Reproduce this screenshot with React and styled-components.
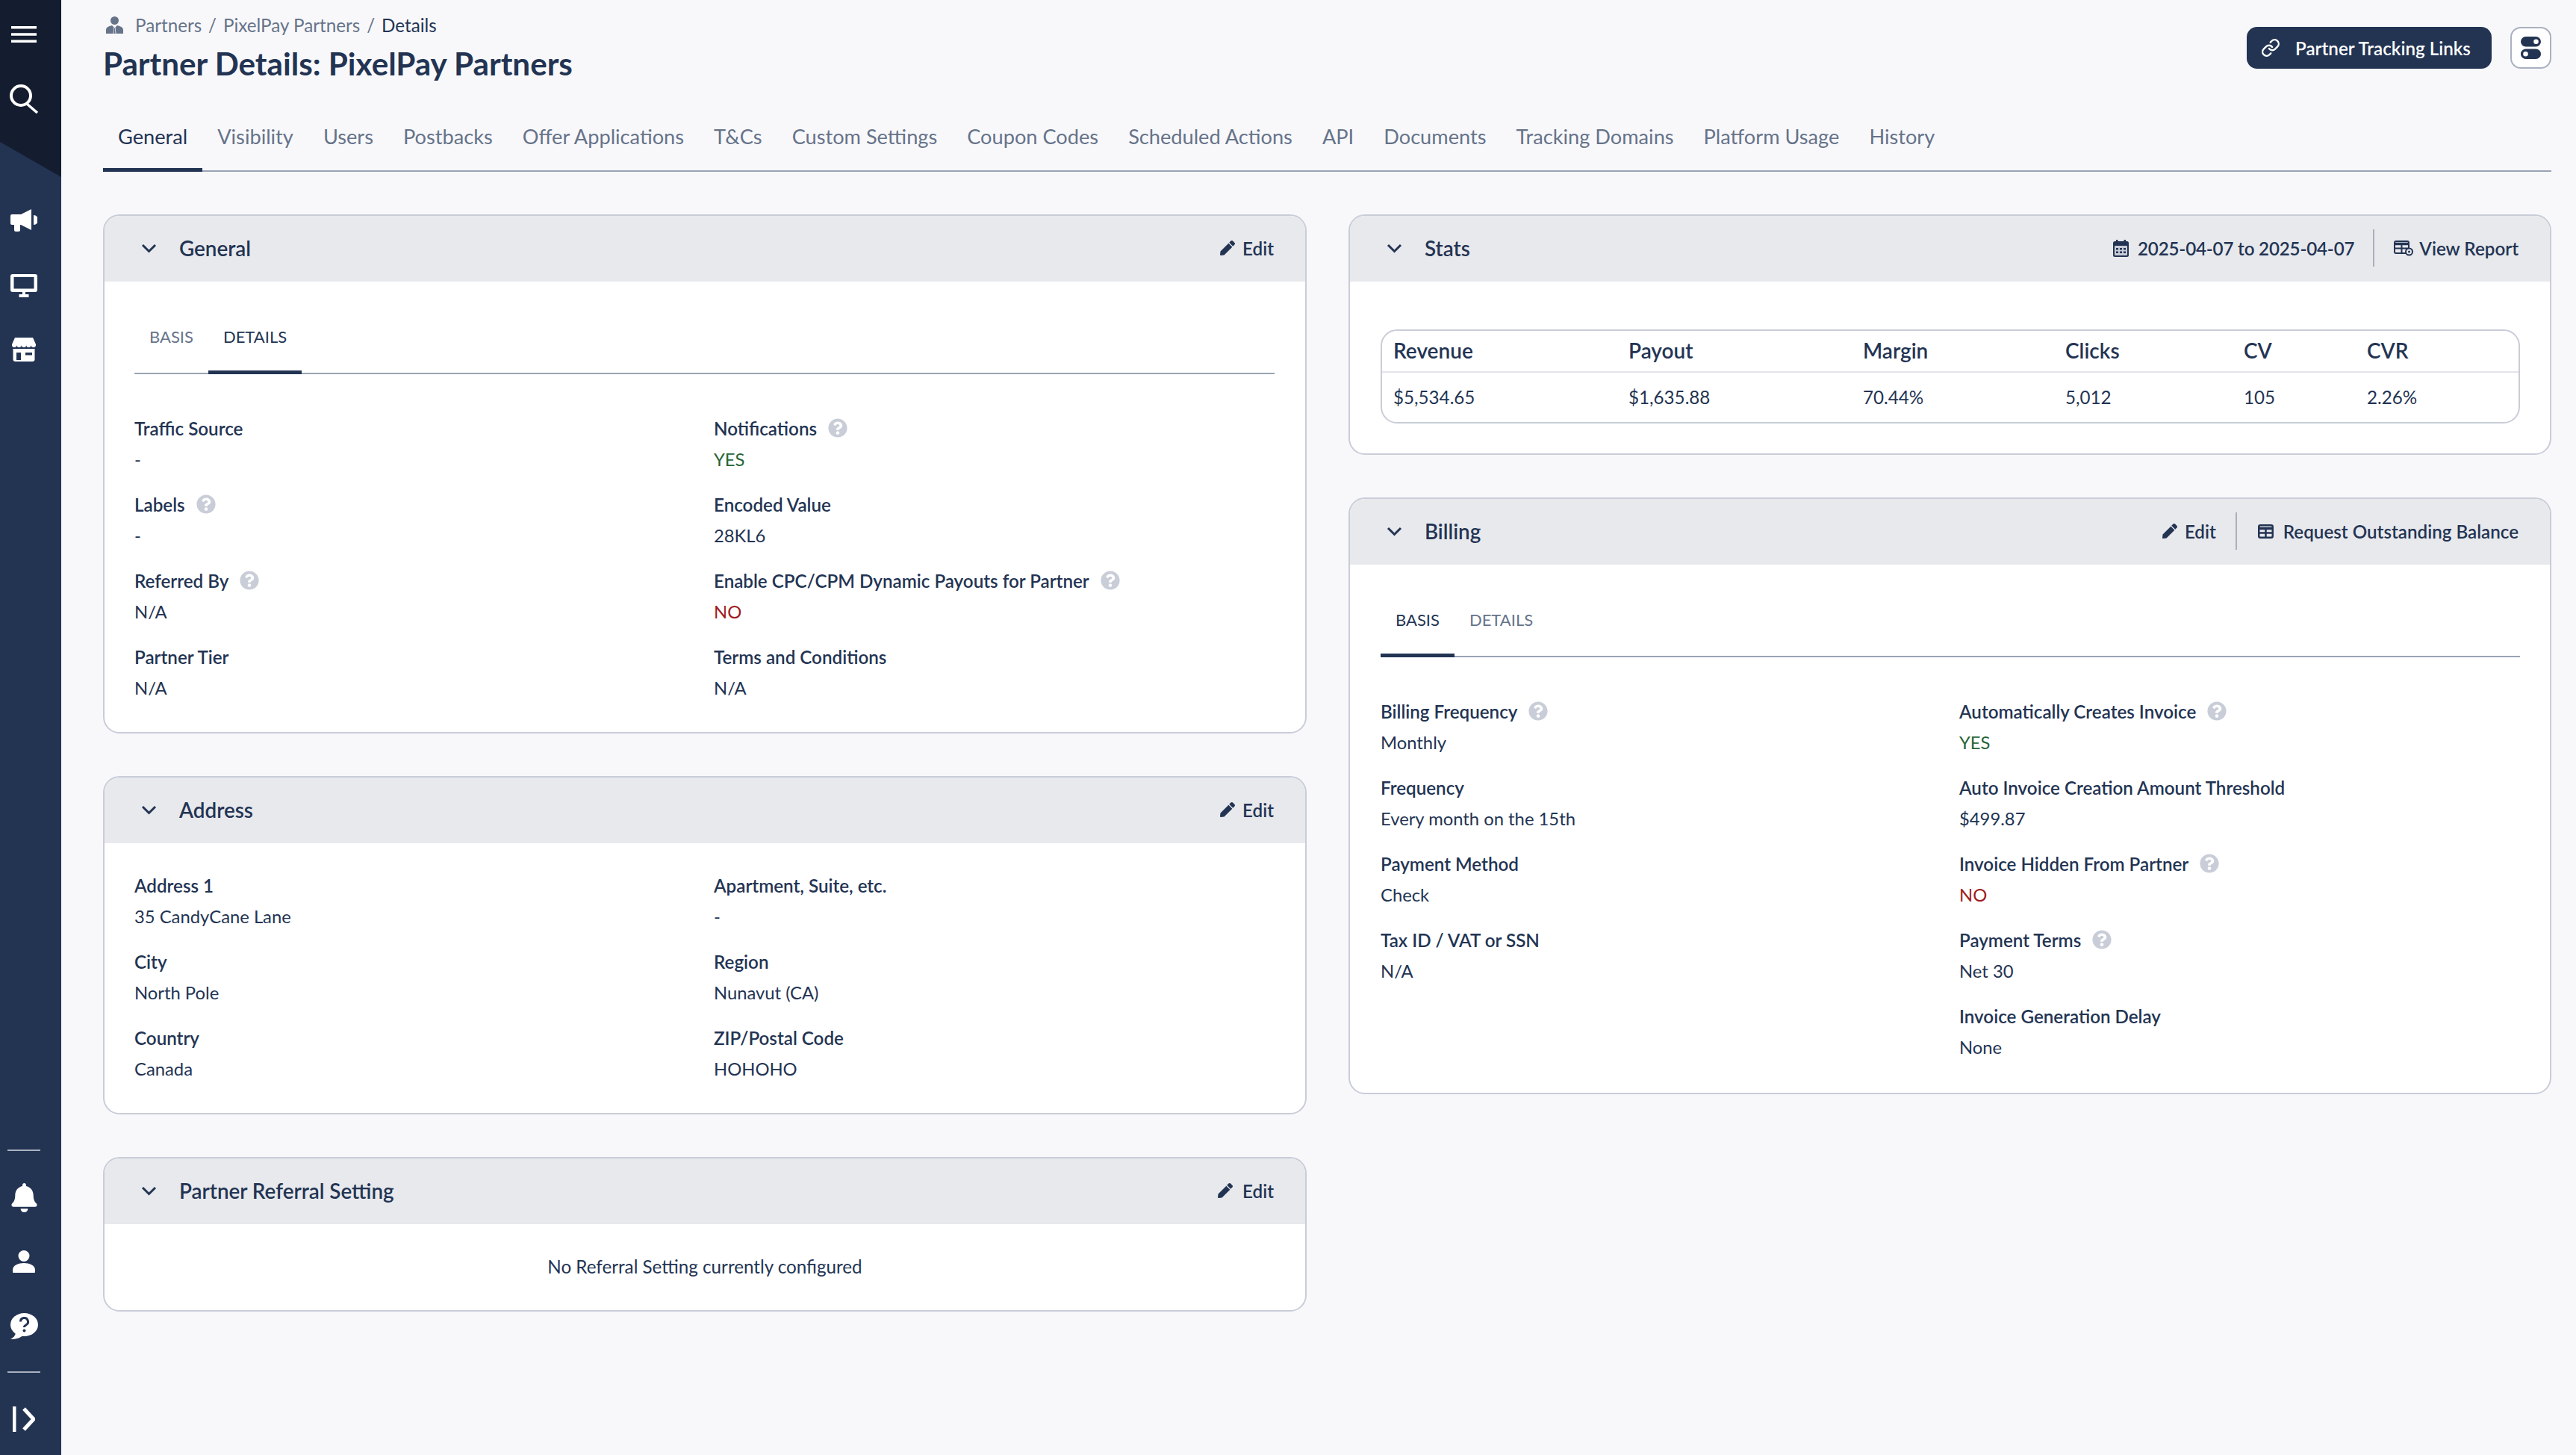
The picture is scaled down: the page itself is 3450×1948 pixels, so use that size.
import React from 'react';
import styled, { createGlobalStyle } from 'styled-components';
import { FaBell, FaPen, FaQuestionCircle } from 'react-icons/fa';
import { Link as LinkIcon } from 'lucide-react';

const navy = '#233453';
const muted = '#667389';
const line = '#9aa3b4';
const edge = '#c8cdd8';

const GlobalStyle = createGlobalStyle`
  html, body {
    margin: 0;
    padding: 0;
    background: #f8f8fb;
    color: ${navy};
    font-family: Lato, "Open Sans", sans-serif;
    -webkit-font-smoothing: antialiased;
  }
  * { box-sizing: border-box; }
`;

const Page = styled.div`
  display: flex;
  width: 3450px;
  height: 1948px;
  overflow: hidden;
`;

const Sidebar = styled.nav`
  display: flex;
  flex-direction: column;
  flex: 0 0 82px;
  background: ${navy};
  color: #fff;
`;

const SidebarTop = styled.div`
  display: flex;
  flex-direction: column;
  align-items: center;
  height: 237px;
  padding: 35px 18px 0 0;
  background: #141c30;
  clip-path: polygon(0 0, 100% 0, 100% 100%, 0 190px);
`;

const HamburgerLines = styled.svg`
  display: block;
  margin-bottom: 56px;
`;

const SidebarGroup = styled.div`
  display: flex;
  flex-direction: column;
  padding-top: 15px;
`;

const SidebarBottom = styled.div`
  display: flex;
  flex-direction: column;
  margin-top: auto;
`;

const SidebarSlot = styled.div`
  display: flex;
  align-items: center;
  justify-content: center;
  height: ${p => p.$h || 86}px;
  padding-right: 18px;
`;

const ExpandSlot = styled.div`
  display: flex;
  justify-content: center;
  height: 110px;
  padding: 45px 18px 0 0;
`;

const SidebarRule = styled.div`
  width: 44px;
  height: 2px;
  margin: ${p => p.$m};
  background: #aab1be;
`;

const Main = styled.main`
  flex: 1;
  min-width: 0;
  padding: 0 33px 0 56px;
`;

const TopRow = styled.header`
  display: flex;
  justify-content: space-between;
  align-items: flex-start;
`;

const Heading = styled.div`
  padding-top: 20px;
`;

const Crumbs = styled.div`
  display: flex;
  align-items: center;
  gap: 9px;
  height: 26px;
  margin-left: 4px;
  font-size: 24.2px;
  color: ${muted};
`;

const CrumbIcon = styled.svg`
  margin-right: 7px;
  color: ${muted};
`;

const CrumbHere = styled.span`
  color: ${navy};
`;

const Title = styled.h1`
  margin: 15px 0 0;
  font-size: 42.2px;
  line-height: 48px;
  font-weight: 700;
  color: ${navy};
`;

const TopActions = styled.div`
  display: flex;
  gap: 25px;
  padding-top: 36px;
`;

const LinksButton = styled.button`
  display: flex;
  align-items: center;
  gap: 20px;
  width: 328px;
  height: 56px;
  padding: 0 0 0 19px;
  border: 0;
  border-radius: 14px;
  background: ${navy};
  color: #fff;
  font: 600 24.2px Lato, sans-serif;
`;

const ToggleButton = styled.button`
  display: flex;
  align-items: center;
  justify-content: center;
  width: 55px;
  height: 56px;
  padding: 0;
  border: 2px solid #aab1c0;
  border-radius: 14px;
  background: #fff;
`;

const TabBar = styled.div`
  display: flex;
  margin-top: 28px;
  border-bottom: 2px solid ${line};
`;

const Tab = styled.div`
  height: 93px;
  margin-bottom: -2px;
  padding: 4px 20px 0;
  line-height: 84px;
  font-size: 27.2px;
  color: ${p => (p.$active ? navy : muted)};
  border-bottom: 5px solid ${p => (p.$active ? navy : 'transparent')};
`;

const Columns = styled.div`
  display: grid;
  grid-template-columns: 1612px 1611px;
  gap: 56px;
  margin-top: 57px;
  align-items: start;
`;

const Column = styled.div`
  display: flex;
  flex-direction: column;
  gap: ${p => p.$gap}px;
`;

const Card = styled.section`
  border: 2px solid ${edge};
  border-radius: 22px;
  background: #fff;
  overflow: hidden;
`;

const CardHead = styled.div`
  display: flex;
  align-items: center;
  height: 88px;
  padding: 0 42px 2px 49px;
  background: #e8e9ed;
`;

const CardTitle = styled.h2`
  margin: 0 auto 0 30px;
  font-size: 27.8px;
  font-weight: 600;
  color: ${navy};
`;

const HeadAction = styled.div`
  display: flex;
  align-items: center;
  gap: ${p => p.$gap || 10}px;
  font-size: 24.2px;
  font-weight: 600;
  letter-spacing: ${p => p.$spacing || 0}px;
  color: ${navy};
`;

const HeadRule = styled.div`
  width: 2px;
  height: 50px;
  margin: 0 ${p => p.$right || 26}px 0 ${p => p.$left || 26}px;
  background: #a9b0bf;
`;

const CardBody = styled.div`
  padding: ${p => p.$pad};
`;

const SubTabBar = styled.div`
  display: flex;
  margin-bottom: 58px;
  border-bottom: 2px solid ${line};
`;

const SubTab = styled.div`
  height: 96px;
  margin-bottom: -2px;
  padding: 3px 20px 0;
  line-height: 86px;
  font-size: 22px;
  color: ${p => (p.$active ? navy : muted)};
  border-bottom: 5px solid ${p => (p.$active ? navy : 'transparent')};
`;

const FieldGrid = styled.div`
  display: grid;
  grid-template-columns: ${p => p.$first}px 1fr;
`;

const FieldColumn = styled.div`
  display: flex;
  flex-direction: column;
  gap: 32px;
`;

const FieldLabel = styled.div`
  display: flex;
  align-items: center;
  gap: 15px;
  height: 28px;
  font-size: 24.2px;
  font-weight: 600;
  color: ${navy};
`;

const FieldValue = styled.div`
  height: 28px;
  margin-top: 14px;
  line-height: 28px;
  font-size: 23.8px;
  color: ${p => p.$tone || navy};
`;

const EmptyNote = styled.div`
  display: flex;
  align-items: center;
  justify-content: center;
  height: 115px;
  padding-bottom: 2px;
  font-size: 24.2px;
  color: ${navy};
`;

const StatsTable = styled.div`
  border: 2px solid ${edge};
  border-radius: 22px;
`;

const StatsRow = styled.div`
  display: grid;
  grid-template-columns: 315px 314px 271px 239px 165px 1fr;
  align-items: center;
  height: ${p => p.$h}px;
  padding: 0 0 2px 15px;
  font-size: ${p => (p.$head ? 28 : 24.2)}px;
  font-weight: ${p => (p.$head ? 600 : 400)};
  border-bottom: ${p => (p.$head ? '2px solid #e3e5ea' : '0')};
`;

const Burger = () => (
  <HamburgerLines width="34" height="22" viewBox="0 0 34 22" fill="#fff">
    <rect y="0" width="34" height="3.500" />
    <rect y="9.250" width="34" height="3.500" />
    <rect y="18.500" width="34" height="3.500" />
  </HamburgerLines>
);

const SearchGlyph = () => (
  <svg width="39" height="39" viewBox="0 0 39 39" fill="none" stroke="#fff" strokeWidth="4">
    <circle cx="15" cy="15" r="13" />
    <path d="M23 26 L37 38" strokeWidth="3.500" />
  </svg>
);

const MegaphoneGlyph = () => (
  <svg width="36" height="31" viewBox="0 0 36 31" fill="#fff">
    <path d="M2 7H14L28 0V28L14 21H13V28a2 2 0 0 1-2 2H7a2 2 0 0 1-2-2V21H2a2 2 0 0 1-2-2V9a2 2 0 0 1 2-2Z" />
    <path d="M31 8a6.500 6.500 0 0 1 0 13Z" />
  </svg>
);

const MonitorGlyph = () => (
  <svg width="36" height="31" viewBox="0 0 36 31" fill="#fff">
    <path fillRule="evenodd" d="M3 0H33a3 3 0 0 1 3 3V21a3 3 0 0 1-3 3H3a3 3 0 0 1-3-3V3a3 3 0 0 1 3-3ZM4.500 4V19.500H31.500V4Z" />
    <rect x="16" y="24" width="4" height="4" />
    <rect x="11.500" y="27" width="13" height="4" />
  </svg>
);

const StoreGlyph = () => (
  <svg width="32" height="32" viewBox="0 0 32 32" fill="#fff">
    <path d="M4 0H28L32 9V10a3.200 3 0 0 1-6.400 0 3.200 3 0 0 1-6.400 0 3.200 3 0 0 1-6.400 0 3.200 3 0 0 1-6.400 0 3.200 3 0 0 1-6.400 0V9Z" />
    <path fillRule="evenodd" d="M1.500 15H30.500V29a3 3 0 0 1-3 3H4.500a3 3 0 0 1-3-3ZM6 20V30H12V20ZM18 20V23.500H27V20Z" />
  </svg>
);

const PersonGlyph = () => (
  <svg width="30" height="30" viewBox="0 0 30 30" fill="#fff">
    <circle cx="15" cy="7.500" r="7.500" />
    <path d="M1 30a1 1 0 0 1-1-1V26C0 20 8 17 15 17S30 20 30 26V29a1 1 0 0 1-1 1Z" />
  </svg>
);

const HelpBubble = () => (
  <svg width="38" height="35" viewBox="0 0 38 35">
    <ellipse cx="19.500" cy="15.500" rx="18.500" ry="15.500" fill="#fff" />
    <path d="M8 25C8 30 5 33 1 35C9 35 14 33 18 30Z" fill="#fff" />
    <path d="M14.500 11.500a5 5 0 1 1 7.500 4.300c-1.700 1-2.500 1.600-2.500 3.200" fill="none" stroke={navy} strokeWidth="3" />
    <circle cx="19.500" cy="23.500" r="2" fill={navy} />
  </svg>
);

const ExpandGlyph = () => (
  <svg width="30" height="34" viewBox="0 0 30 34" fill="none" stroke="#fff">
    <path d="M2.250 0V34" strokeWidth="4.500" />
    <path d="M15 3L28 17L15 31" strokeWidth="5" />
  </svg>
);

const PersonSuit = () => (
  <CrumbIcon width="23" height="23" viewBox="0 0 23 23" fill="currentColor">
    <circle cx="11.500" cy="5.500" r="5.500" />
    <path d="M0 23V18C0 14.500 4 13 8 12L10.500 14.500 9.500 23ZM23 23V18C23 14.500 19 13 15 12L12.500 14.500 13.500 23Z" />
    <path d="M10.300 23 11 15.500H12L12.700 23Z" />
  </CrumbIcon>
);

const Chevron = () => (
  <svg width="21" height="13" viewBox="0 0 21 13" fill="none" stroke={navy} strokeWidth="3">
    <path d="M2 2L10.500 10.500L19 2" />
  </svg>
);

const TableGlyph = () => (
  <svg width="21" height="19" viewBox="0 0 21 19" fill="none" stroke={navy} strokeWidth="2.500">
    <rect x="1.250" y="1.250" width="18.500" height="16.500" rx="2" />
    <path d="M1 5.500H20" strokeWidth="3.500" />
    <path d="M1 11.500H20M10.500 5V18" />
  </svg>
);

const ReportGlyph = () => (
  <svg width="26" height="21" viewBox="0 0 26 21" fill="none" stroke={navy} strokeWidth="2">
    <rect x="1" y="1" width="19" height="16" rx="2" />
    <path d="M1 4.500H20" strokeWidth="3.500" />
    <path d="M1 10.500H20M10.500 4V17" />
    <circle cx="20.500" cy="15" r="4.500" fill="#e8e9ed" />
    <circle cx="20.500" cy="15" r="1.500" fill={navy} stroke="none" />
  </svg>
);

const CalendarGlyph = () => (
  <svg width="21" height="23" viewBox="0 0 21 23" fill={navy}>
    <rect y="2" width="21" height="21" rx="2.500" />
    <rect x="4" y="0" width="2.500" height="4" />
    <rect x="14.500" y="0" width="2.500" height="4" />
    <rect x="2" y="8" width="17" height="13" rx="1" fill="#c7ccd6" />
    {[4, 9, 14].map(x => [11, 15.5].map(y => (
      <rect key={`${x}-${y}`} x={x} y={y} width="3" height="2.500" />
    )))}
  </svg>
);

const ToggleGlyph = () => (
  <svg width="27" height="30" viewBox="0 0 27 30">
    <rect width="27" height="13.500" rx="6.750" fill={navy} />
    <circle cx="20.500" cy="6.750" r="3.300" fill="#fff" />
    <rect y="16.500" width="27" height="13.500" rx="6.750" fill={navy} />
    <circle cx="6.500" cy="23.250" r="3.300" fill="#fff" />
  </svg>
);

const tabs = ['General', 'Visibility', 'Users', 'Postbacks', 'Offer Applications', 'T&Cs', 'Custom Settings', 'Coupon Codes', 'Scheduled Actions', 'API', 'Documents', 'Tracking Domains', 'Platform Usage', 'History'];

const green = '#266536';
const red = '#a01c20';

const generalLeft = [
  { label: 'Traffic Source', value: '-' },
  { label: 'Labels', value: '-', help: true },
  { label: 'Referred By', value: 'N/A', help: true },
  { label: 'Partner Tier', value: 'N/A' },
];
const generalRight = [
  { label: 'Notifications', value: 'YES', help: true, tone: green },
  { label: 'Encoded Value', value: '28KL6' },
  { label: 'Enable CPC/CPM Dynamic Payouts for Partner', value: 'NO', help: true, tone: red },
  { label: 'Terms and Conditions', value: 'N/A' },
];
const addressLeft = [
  { label: 'Address 1', value: '35 CandyCane Lane' },
  { label: 'City', value: 'North Pole' },
  { label: 'Country', value: 'Canada' },
];
const addressRight = [
  { label: 'Apartment, Suite, etc.', value: '-' },
  { label: 'Region', value: 'Nunavut (CA)' },
  { label: 'ZIP/Postal Code', value: 'HOHOHO' },
];
const billingLeft = [
  { label: 'Billing Frequency', value: 'Monthly', help: true },
  { label: 'Frequency', value: 'Every month on the 15th' },
  { label: 'Payment Method', value: 'Check' },
  { label: 'Tax ID / VAT or SSN', value: 'N/A' },
];
const billingRight = [
  { label: 'Automatically Creates Invoice', value: 'YES', help: true, tone: green },
  { label: 'Auto Invoice Creation Amount Threshold', value: '$499.87' },
  { label: 'Invoice Hidden From Partner', value: 'NO', help: true, tone: red },
  { label: 'Payment Terms', value: 'Net 30', help: true },
  { label: 'Invoice Generation Delay', value: 'None' },
];
const statHeads = ['Revenue', 'Payout', 'Margin', 'Clicks', 'CV', 'CVR'];
const statValues = ['$5,534.65', '$1,635.88', '70.44%', '5,012', '105', '2.26%'];

const Fields = ({ items }) => (
  <FieldColumn>
    {items.map(f => (
      <div key={f.label}>
        <FieldLabel>
          {f.label}
          {f.help && <FaQuestionCircle size={26} color={edge} />}
        </FieldLabel>
        <FieldValue $tone={f.tone}>{f.value}</FieldValue>
      </div>
    ))}
  </FieldColumn>
);

const Head = ({ title, children }) => (
  <CardHead>
    <Chevron />
    <CardTitle>{title}</CardTitle>
    {children}
  </CardHead>
);

const EditAction = ({ gap }) => (
  <HeadAction $gap={gap}>
    <FaPen size={20} />
    Edit
  </HeadAction>
);

const SubTabs = ({ active }) => (
  <SubTabBar>
    <SubTab $active={active === 'BASIS'}>BASIS</SubTab>
    <SubTab $active={active === 'DETAILS'}>DETAILS</SubTab>
  </SubTabBar>
);

export default function App() {
  return (
    <Page>
      <GlobalStyle />
      <Sidebar>
        <SidebarTop>
          <Burger />
          <SearchGlyph />
        </SidebarTop>
        <SidebarGroup>
          <SidebarSlot $h={87}><MegaphoneGlyph /></SidebarSlot>
          <SidebarSlot $h={86}><MonitorGlyph /></SidebarSlot>
          <SidebarSlot $h={86}><StoreGlyph /></SidebarSlot>
        </SidebarGroup>
        <SidebarBottom>
          <SidebarRule $m="0 28px 19px 10px" />
          <SidebarSlot><FaBell size={39} /></SidebarSlot>
          <SidebarSlot><PersonGlyph /></SidebarSlot>
          <SidebarSlot><HelpBubble /></SidebarSlot>
          <SidebarRule $m="18px 28px 0 10px" />
          <ExpandSlot><ExpandGlyph /></ExpandSlot>
        </SidebarBottom>
      </Sidebar>
      <Main>
        <TopRow>
          <Heading>
            <Crumbs>
              <PersonSuit />
              <span>Partners</span>
              <span>/</span>
              <span>PixelPay Partners</span>
              <span>/</span>
              <CrumbHere>Details</CrumbHere>
            </Crumbs>
            <Title>Partner Details: PixelPay Partners</Title>
          </Heading>
          <TopActions>
            <LinksButton>
              <LinkIcon size={26} strokeWidth={2.2} />
              Partner Tracking Links
            </LinksButton>
            <ToggleButton><ToggleGlyph /></ToggleButton>
          </TopActions>
        </TopRow>
        <TabBar>
          {tabs.map((t, i) => <Tab key={t} $active={i === 0}>{t}</Tab>)}
        </TabBar>
        <Columns>
          <Column $gap={57}>
            <Card>
              <Head title="General"><EditAction /></Head>
              <CardBody $pad="28px 41px 45px 40px">
                <SubTabs active="DETAILS" />
                <FieldGrid $first={776}>
                  <Fields items={generalLeft} />
                  <Fields items={generalRight} />
                </FieldGrid>
              </CardBody>
            </Card>
            <Card>
              <Head title="Address"><EditAction /></Head>
              <CardBody $pad="42px 41px 45px 40px">
                <FieldGrid $first={776}>
                  <Fields items={addressLeft} />
                  <Fields items={addressRight} />
                </FieldGrid>
              </CardBody>
            </Card>
            <Card>
              <Head title="Partner Referral Setting"><EditAction gap={13} /></Head>
              <EmptyNote>No Referral Setting currently configured</EmptyNote>
            </Card>
          </Column>
          <Column $gap={57}>
            <Card>
              <Head title="Stats">
                <HeadAction $gap={12} $spacing={-0.2}>
                  <CalendarGlyph />
                  2025-04-07 to 2025-04-07
                </HeadAction>
                <HeadRule $left={25} />
                <HeadAction $gap={8}>
                  <ReportGlyph />
                  View Report
                </HeadAction>
              </Head>
              <CardBody $pad="64px 40px 40px 41px">
                <StatsTable>
                  <StatsRow $head $h={56}>
                    {statHeads.map(h => <div key={h}>{h}</div>)}
                  </StatsRow>
                  <StatsRow $h={66}>
                    {statValues.map(v => <div key={v}>{v}</div>)}
                  </StatsRow>
                </StatsTable>
              </CardBody>
            </Card>
            <Card>
              <Head title="Billing">
                <EditAction />
                <HeadRule $right={28} />
                <HeadAction $gap={13}>
                  <TableGlyph />
                  Request Outstanding Balance
                </HeadAction>
              </Head>
              <CardBody $pad="28px 40px 47px 41px">
                <SubTabs active="BASIS" />
                <FieldGrid $first={775}>
                  <Fields items={billingLeft} />
                  <Fields items={billingRight} />
                </FieldGrid>
              </CardBody>
            </Card>
          </Column>
        </Columns>
      </Main>
    </Page>
  );
}
